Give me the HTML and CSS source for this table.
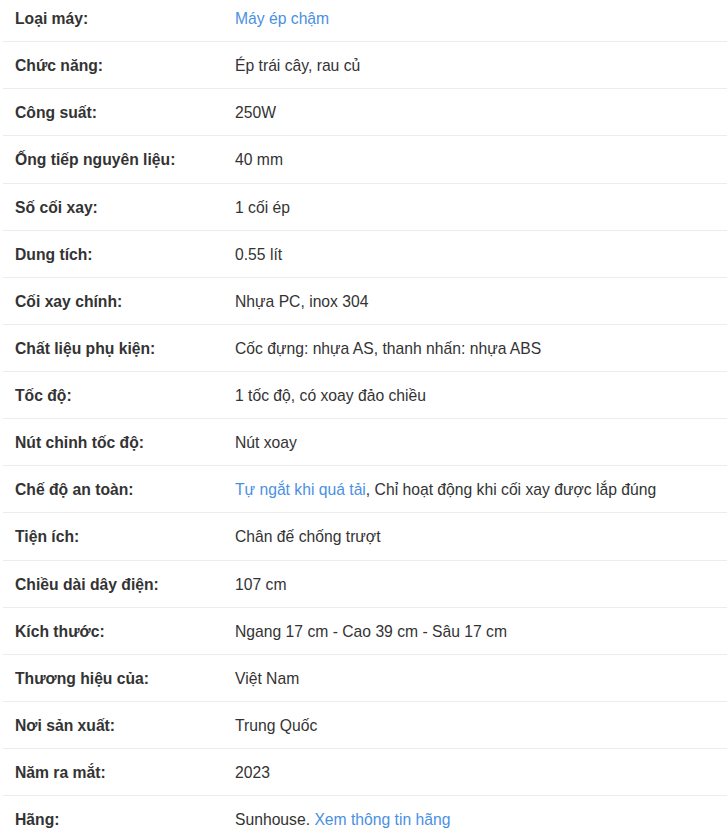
FILE: index.html
```html
<!DOCTYPE html>
<html lang="vi">
<head>
<meta charset="utf-8">
<link rel="stylesheet" href="styles.css">
</head>
<body>
<div class="specs">
  <div class="row"><div class="label">Loại máy:</div><div class="value"><a class="link">Máy ép chậm</a></div></div>
  <div class="row"><div class="label">Chức năng:</div><div class="value">Ép trái cây, rau củ</div></div>
  <div class="row"><div class="label">Công suất:</div><div class="value">250W</div></div>
  <div class="row"><div class="label">Ống tiếp nguyên liệu:</div><div class="value">40 mm</div></div>
  <div class="row"><div class="label">Số cối xay:</div><div class="value">1 cối ép</div></div>
  <div class="row"><div class="label">Dung tích:</div><div class="value">0.55 lít</div></div>
  <div class="row"><div class="label">Cối xay chính:</div><div class="value">Nhựa PC, inox 304</div></div>
  <div class="row"><div class="label">Chất liệu phụ kiện:</div><div class="value">Cốc đựng: nhựa AS, thanh nhấn: nhựa ABS</div></div>
  <div class="row"><div class="label">Tốc độ:</div><div class="value">1 tốc độ, có xoay đảo chiều</div></div>
  <div class="row"><div class="label">Nút chỉnh tốc độ:</div><div class="value">Nút xoay</div></div>
  <div class="row"><div class="label">Chế độ an toàn:</div><div class="value"><a class="link">Tự ngắt khi quá tải</a>, Chỉ hoạt động khi cối xay được lắp đúng</div></div>
  <div class="row"><div class="label">Tiện ích:</div><div class="value">Chân đế chống trượt</div></div>
  <div class="row"><div class="label">Chiều dài dây điện:</div><div class="value">107 cm</div></div>
  <div class="row"><div class="label">Kích thước:</div><div class="value">Ngang 17 cm - Cao 39 cm - Sâu 17 cm</div></div>
  <div class="row"><div class="label">Thương hiệu của:</div><div class="value">Việt Nam</div></div>
  <div class="row"><div class="label">Nơi sản xuất:</div><div class="value">Trung Quốc</div></div>
  <div class="row"><div class="label">Năm ra mắt:</div><div class="value">2023</div></div>
  <div class="row"><div class="label">Hãng:</div><div class="value">Sunhouse. <a class="link">Xem thông tin hãng</a></div></div>
</div>
</body>
</html>
```

FILE: styles.css
```css
html, body {
  margin: 0;
  padding: 0;
  background: #fff;
}
body {
  font-family: "Liberation Sans", Arial, sans-serif;
  font-size: 15.7px;
  color: #333;
  overflow: hidden;
}
.specs {
  margin: -5px 0 0 3px;
  display: flex;
  flex-direction: column;
}
.row {
  display: grid;
  grid-template-columns: 220px 1fr;
  border-bottom: 1px solid #ececec;
}
.label, .value {
  padding: 13px 12px 11px;
  line-height: 22.125px;
}
.label {
  font-weight: bold;
  color: #333;
}
.link {
  color: #4a90e2;
  text-decoration: none;
}
```
